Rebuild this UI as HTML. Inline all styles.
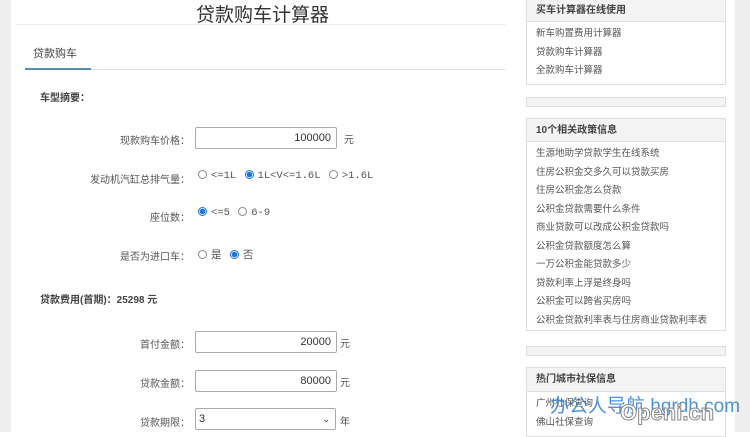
<!DOCTYPE html><html><head><meta charset="utf-8"><style>
*{margin:0;padding:0;box-sizing:border-box}
body{width:750px;height:432px;overflow:hidden;background:#fff;font-family:"Liberation Sans","Noto Sans CJK SC",sans-serif;color:#555;font-size:10px;position:relative}
.a{position:absolute;white-space:nowrap}
.lab{position:absolute;right:560px;width:200px;text-align:right;font-size:10px;color:#555}
.inp{position:absolute;left:195px;width:142px;height:22px;border:1px solid #aaa;border-radius:2px;text-align:right;padding-right:5px;line-height:20px;font-size:11px;color:#333}
.r{display:inline-block;width:9px;height:9px;border:1px solid #888;border-radius:50%;vertical-align:-1px;margin:0 4px 0 0}
.r.on{border-color:#1a73e8;background:radial-gradient(#1a73e8 0 2.5px,#fff 3px)}
.m{font-family:"Liberation Mono","Noto Sans CJK SC",monospace;font-size:10.5px}
.box{position:absolute;left:526px;width:200px;border:1px solid #ddd;background:#fff}
.hd{background:#f3f3f3;border-bottom:1px solid #ddd;font-weight:bold;font-size:10px;padding-left:9px;color:#444}
.it{font-size:9.5px;padding-left:9px;color:#555;line-height:18.5px}
</style></head><body>
<div class="a" style="left:0;top:0;width:11px;height:432px;background:#eee"></div>
<div class="a" style="left:735px;top:0;width:15px;height:432px;background:#eee"></div>
<div class="a" style="left:196px;top:0px;font-size:19px;color:#333">贷款购车计算器</div>
<div class="a" style="left:16px;top:24px;width:490px;height:1px;background:#eee"></div>
<div class="a" style="left:33px;top:45px;font-size:11px;color:#444">贷款购车</div>
<div class="a" style="left:25px;top:69px;width:480px;height:1px;background:#ddd"></div>
<div class="a" style="left:25px;top:68px;width:66px;height:2px;background:#5a8db0"></div>
<div class="a" style="left:40px;top:89px;font-weight:bold;color:#444">车型摘要：</div>
<div class="lab" style="top:132px">现款购车价格：</div>
<div class="inp" style="top:127px">100000</div><div class="a" style="left:344px;top:131px">元</div>
<div class="lab" style="top:171px">发动机汽缸总排气量：</div>
<div class="a m" style="left:198px;top:170px"><span class="r"></span>&lt;=1L <span class="r on" style="margin-left:2px"></span>1L&lt;V&lt;=1.6L <span class="r" style="margin-left:2px"></span>&gt;1.6L</div>
<div class="lab" style="top:209px">座位数：</div>
<div class="a m" style="left:198px;top:207px"><span class="r on"></span>&lt;=5 <span class="r" style="margin-left:2px"></span>6-9</div>
<div class="lab" style="top:248px">是否为进口车：</div>
<div class="a m" style="left:198px;top:247px"><span class="r"></span>是 <span class="r on" style="margin-left:2px"></span>否</div>
<div class="a" style="left:40px;top:291px;font-weight:bold;color:#444">贷款费用(首期)：25298 元</div>
<div class="lab" style="top:336px">首付金额：</div>
<div class="inp" style="top:331px">20000</div><div class="a" style="left:340px;top:335px">元</div>
<div class="lab" style="top:375px">贷款金额：</div>
<div class="inp" style="top:370px">80000</div><div class="a" style="left:340px;top:374px">元</div>
<div class="lab" style="top:414px">贷款期限：</div>
<div class="inp" style="top:408px;text-align:left;padding-left:3px;width:141px">3<span style="position:absolute;right:5px;top:0;font-size:9px">&#8964;</span></div><div class="a" style="left:340px;top:413px">年</div>
<div class="box" style="top:-1px;height:86px"><div class="hd" style="height:22px;line-height:22px">买车计算器在线使用</div><div style="padding-top:3px"><div class="it">新车购置费用计算器</div><div class="it">贷款购车计算器</div><div class="it">全款购车计算器</div></div></div>
<div class="box" style="top:97px;height:10px;background:#f3f3f3"></div>
<div class="box" style="top:118px;height:213px"><div class="hd" style="height:23px;line-height:23px">10个相关政策信息</div><div style="padding-top:3px"><div class="it">生源地助学贷款学生在线系统</div><div class="it">住房公积金交多久可以贷款买房</div><div class="it">住房公积金怎么贷款</div><div class="it">公积金贷款需要什么条件</div><div class="it">商业贷款可以改成公积金贷款吗</div><div class="it">公积金贷款额度怎么算</div><div class="it">一万公积金能贷款多少</div><div class="it">贷款利率上浮是终身吗</div><div class="it">公积金可以跨省买房吗</div><div class="it">公积金贷款利率表与住房商业贷款利率表</div></div></div>
<div class="box" style="top:346px;height:10px;background:#f3f3f3"></div>
<div class="box" style="top:367px;height:70px"><div class="hd" style="height:24px;line-height:24px">热门城市社保信息</div><div style="padding-top:3px"><div class="it">广州社保查询</div><div class="it">佛山社保查询</div></div></div>
<div class="a" style="left:550px;top:391px;font-size:19px;color:#2f7fd8;opacity:.85">办公人导航 hgrdh.com</div>
<div class="a" style="left:620px;top:400px;font-size:22px;color:#fff;-webkit-text-stroke:1px #888;font-weight:bold">Openi.cn</div>
</body></html>
